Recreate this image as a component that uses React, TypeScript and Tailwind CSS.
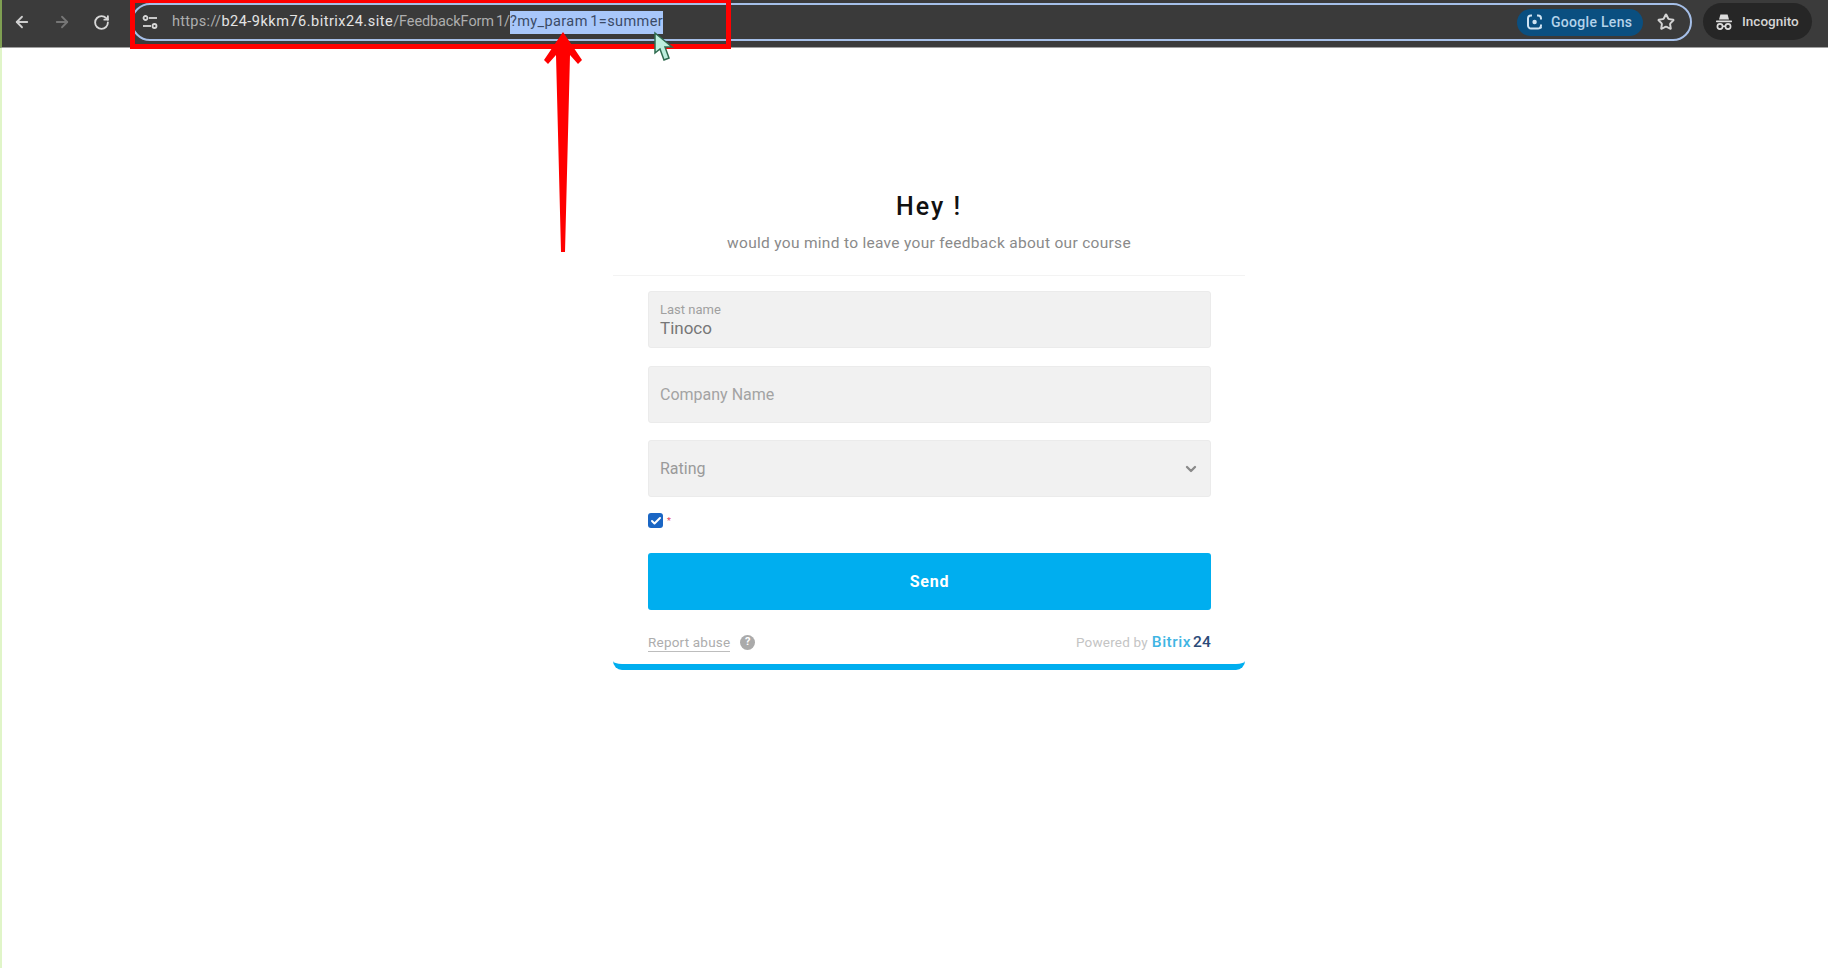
import { ArrowLeft, ArrowRight, RotateCw, Star, ChevronDown, Check } from "lucide-react";

function Field({ children }: { children: React.ReactNode }) {
  return (
    <div className="h-[57px] w-full rounded-[3px] border border-[#ebebeb] bg-[#f1f1f1] px-[11px] flex items-center justify-between">
      {children}
    </div>
  );
}

function TuneIcon() {
  return (
    <svg width="16" height="16" viewBox="0 0 16 16" fill="none" stroke="#d8d8d8" strokeWidth="1.8">
      <circle cx="3.5" cy="4" r="2" />
      <path d="M7 4h8" />
      <path d="M1 12h8" />
      <circle cx="12.5" cy="12" r="2" />
    </svg>
  );
}

function LensIcon() {
  return (
    <svg width="18" height="18" viewBox="0 0 18 18" fill="none" stroke="#cfe3f2" strokeWidth="2">
      <path d="M6 2.5H5A3 3 0 0 0 2 5.5v7a3 3 0 0 0 3 3h7a3 3 0 0 0 3-3v-1" />
      <path d="M11 2.5h1a3 3 0 0 1 3 3v1" />
      <circle cx="8.6" cy="9" r="2.2" fill="#cfe3f2" stroke="none" />
      <circle cx="14.6" cy="14.6" r="1.2" fill="#cfe3f2" stroke="none" />
    </svg>
  );
}

function IncognitoIcon() {
  return (
    <svg width="18" height="18" viewBox="0 0 18 18" fill="#dcdcdc">
      <path d="M5.4 1.5h7.2l1.4 5H4z" />
      <rect x="1" y="7.4" width="16" height="1.8" rx="0.6" />
      <circle cx="5" cy="13.5" r="2.6" fill="none" stroke="#dcdcdc" strokeWidth="1.7" />
      <circle cx="13" cy="13.5" r="2.6" fill="none" stroke="#dcdcdc" strokeWidth="1.7" />
      <rect x="7.4" y="12.5" width="3.2" height="1.5" />
    </svg>
  );
}

export default function App() {
  return (
    <div className="relative min-h-[968px] w-full overflow-hidden bg-white font-['Roboto',sans-serif]">
      {/* Browser toolbar */}
      <header className="flex h-12 items-start border-b border-l-2 border-b-[#a0a0a0] border-l-[#7f9f52] bg-[#3b3b3b] pl-[11px] pr-4 pt-[3px]">
        <div className="flex h-[38px] items-center">
          <ArrowLeft className="h-[18px] w-[18px] text-[#cfcfcf]" strokeWidth={2.4} />
          <ArrowRight className="ml-[22px] h-[18px] w-[18px] text-[#767676]" strokeWidth={2.4} />
          <RotateCw className="ml-[22px] h-[17px] w-[17px] text-[#d8d8d8]" strokeWidth={2.6} />
        </div>
        <div className="ml-[21px] flex h-[38px] flex-1 items-center rounded-full border-2 border-[#a5bfe8] bg-[#3a3a3a] pl-[9px] pr-[15px]">
          <TuneIcon />
          <div className="ml-[14px] flex h-[23px] items-center text-[14.5px] whitespace-nowrap [word-spacing:-1.5px]">
            <span className="tracking-[0.3px] text-[#aeaeae]">https://</span>
            <span className="tracking-[0.5px] text-[#e4e4e4]">b24-9kkm76.bitrix24.site</span>
            <span className="tracking-[-0.1px] text-[#aeaeae]">/FeedbackForm 1/</span>
            <span className="flex h-[23px] items-center bg-[#a8c7fa] tracking-[0.4px] text-[#3a4a66]">?my_param 1=summer</span>
          </div>
          <div className="ml-auto flex items-center">
            <div className="flex h-[27px] w-[126px] items-center rounded-full bg-[#0a4f80] pl-[9px] text-[14px] font-medium tracking-[0.3px] text-[#b4d3ea]">
              <LensIcon />
              <span className="ml-[7px]">Google Lens</span>
            </div>
            <Star className="ml-[14px] h-[18px] w-[18px] text-[#d4d4d4]" strokeWidth={2.6} />
          </div>
        </div>
        <div className="ml-[11px] flex h-[37px] w-[109px] items-center rounded-full bg-[#262626] pl-[12px] text-[13.5px] font-medium text-[#d4d4d4]">
          <IncognitoIcon />
          <span className="ml-[9px]">Incognito</span>
        </div>
      </header>

      {/* Form */}
      <main className="flex min-h-[920px] justify-center border-l-2 border-[#e0f5c8]">
        <div className="ml-[28px] mt-[141px] h-[482px] w-[632px]">
          <div className="flex h-[87px] flex-col items-center border-b border-[#f3f3f3] pt-[1px]">
            <h1 className="text-[25px] font-medium leading-[34px] tracking-[2px] text-[#111]">Hey !</h1>
            <p className="mt-[8px] text-[15.5px] leading-[22px] tracking-[0.3px] text-[#8a8a8a]">would you mind to leave your feedback about our course</p>
          </div>
          <div className="ml-[35px] flex w-[563px] flex-col pt-[15px]">
            <Field>
              <div className="flex flex-col">
                <span className="text-[13px] leading-[15px] text-[#a0a0a0]">Last name</span>
                <span className="mt-[1px] text-[17px] leading-[20px] text-[#777]">Tinoco</span>
              </div>
            </Field>
            <div className="mt-[18px]">
              <Field><span className="pt-[1px] text-[16px] text-[#a3a3a3]">Company Name</span></Field>
            </div>
            <div className="mt-[17px]">
              <Field>
                <span className="pt-[1px] text-[16px] text-[#9a9a9a]">Rating</span>
                <ChevronDown className="h-[16px] w-[16px] text-[#8a8a8a]" strokeWidth={3.5} />
              </Field>
            </div>
            <div className="mt-4 flex items-center">
              <span className="flex h-[15px] w-[15px] items-center justify-center rounded-[3px] bg-[#1a66c4]">
                <Check className="h-3 w-3 text-white" strokeWidth={4} />
              </span>
              <span className="ml-[4px] mt-[2px] text-[9px] leading-none text-[#e2445c]">*</span>
            </div>
            <button className="mt-[25px] h-[57px] w-full rounded-[3px] bg-[#00aeef] text-[16px] font-bold tracking-[0.8px] text-white">Send</button>
            <div className="mt-[23px] flex h-[18px] items-center justify-between pt-[1px]">
              <div className="flex items-center">
                <span className="border-b border-[#bdbdbd] text-[13.5px] leading-[17px] tracking-[0.2px] text-[#adadad]">Report abuse</span>
                <span className="ml-[10px] flex h-[15px] w-[15px] items-center justify-center rounded-full bg-[#aaaaaa] text-[11px] font-bold text-white">?</span>
              </div>
              <div className="flex items-center text-[13.5px] tracking-[0.2px] text-[#c4c4c4]">
                <span>Powered by</span>
                <span className="ml-1 text-[15.5px] font-medium tracking-[0.5px] text-[#3fb5e3]">Bitrix</span>
                <span className="ml-[2px] text-[15.5px] font-medium text-[#2a4a78]">24</span>
              </div>
            </div>
          </div>
          <div className="mt-[9px] h-[10px] rounded-b-[9px] border-b-[6px] border-[#00aeef]"></div>
        </div>
      </main>

      {/* Annotation overlays */}
      <div className="absolute left-[130px] top-0 h-[49px] w-[601px] border-x-[5px] border-b-[5px] border-t-[3px] border-[#ff0000]"></div>
      <svg className="absolute left-0 top-0" width="760" height="270" viewBox="0 0 760 270">
        <polygon points="563,32 582,60 578,64 570,55 565,252 561,252 556,55 548,64 544,60" fill="#ff0000" />
        <path d="M655 33 L655 53 L660 49 L664 60 L669 58 L665 47 L672 47 Z" fill="#bdeedd" stroke="#2f6b4f" strokeWidth="1.5" />
      </svg>
    </div>
  );
}
